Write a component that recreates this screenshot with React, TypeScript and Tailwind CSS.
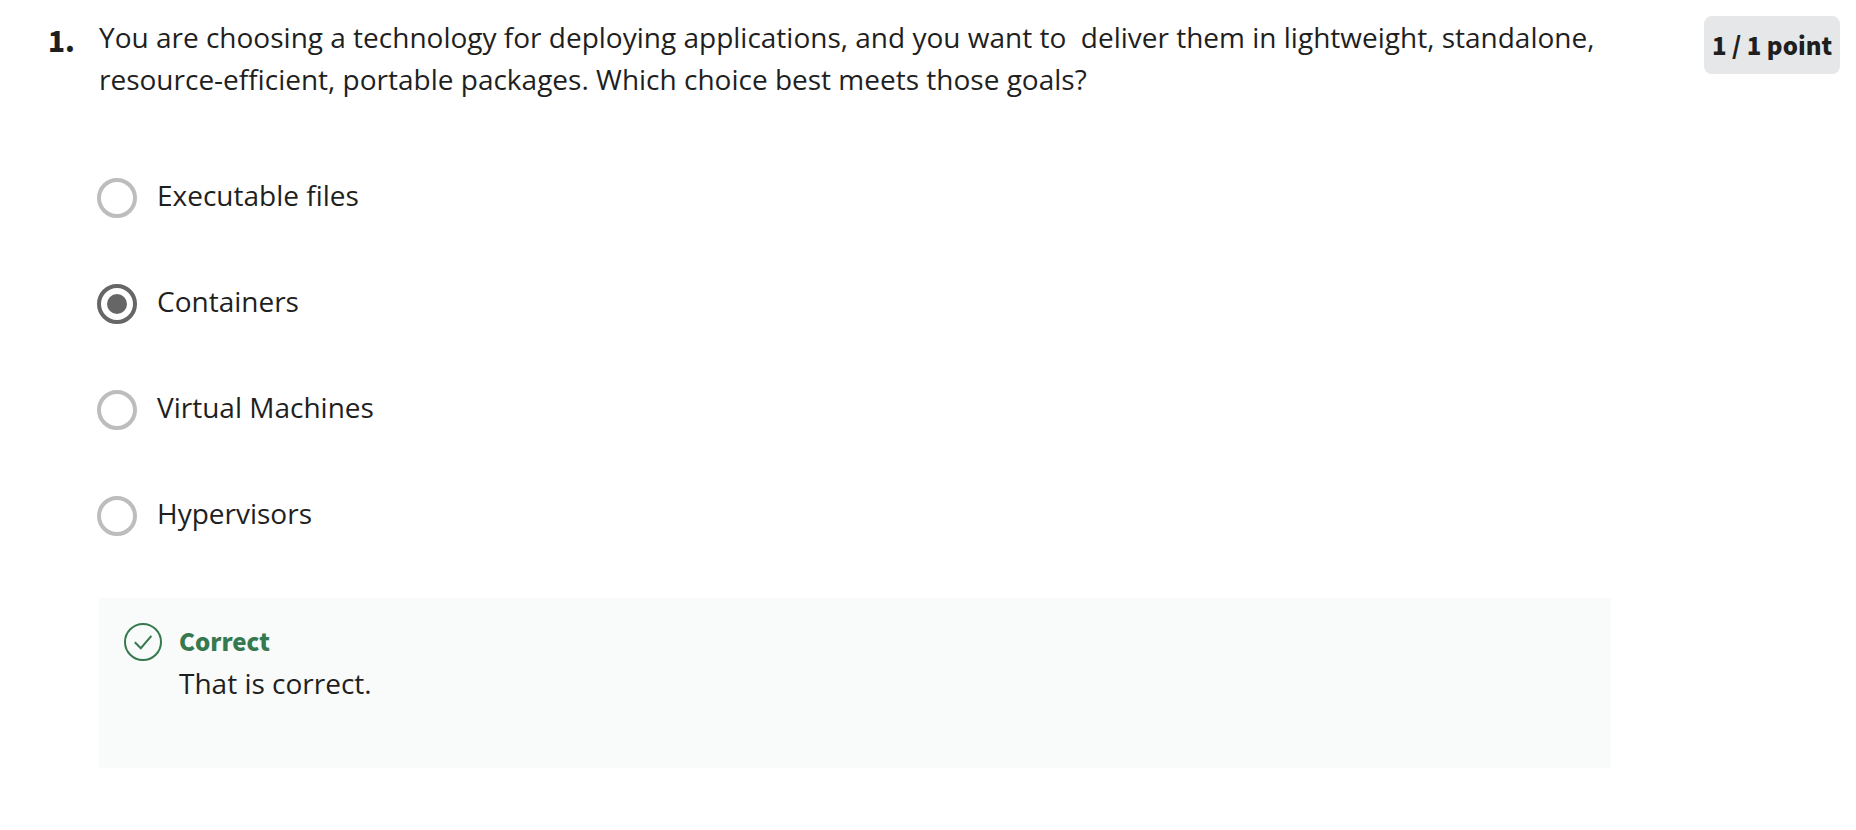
const choices = ['Executable files', 'Containers', 'Virtual Machines', 'Hypervisors'];

const question =
  'You are choosing a technology for deploying applications, and you want to \u00a0deliver them in lightweight, standalone, resource-efficient, portable packages. Which choice best meets those goals?';

function CheckCircle() {
  return (
    <svg className="mt-6 size-10 shrink-0" viewBox="0 0 40 40" fill="none" stroke="#37794f" strokeWidth="2" aria-hidden="true">
      <circle cx="20" cy="20" r="18" />
      <path d="M11.8 20.2 L17.8 26.2 L28.4 13.8" />
    </svg>
  );
}

export default function App() {
  return (
    <main className="flex items-start bg-white py-4 pr-4 pl-12 font-['Open_Sans',sans-serif] text-[28px] leading-[42px] text-[#1f1f1f]">
      <div className="w-[51px] shrink-0 pt-[3px] font-['Noto_Sans_CJK_SC',sans-serif] font-black">1.</div>
      <fieldset className="min-w-0 flex-1">
        <legend className="pr-3">{question}</legend>
        <div className="flex flex-col gap-[62px] pt-[74px]">
          {choices.map((choice) => (
            <label key={choice} className="-ml-0.5 flex items-start gap-5">
              <input
                type="radio"
                name="answer"
                value={choice}
                defaultChecked={choice === 'Containers'}
                className="mt-1 grid size-10 shrink-0 appearance-none place-items-center rounded-full border-4 border-[#bdbdbd] before:size-5 before:rounded-full checked:border-[#666] checked:before:bg-[#666]"
              />
              <span>{choice}</span>
            </label>
          ))}
          <section className="flex gap-4 bg-[#f8fbfa] pb-16 pl-6">
            <CheckCircle />
            <div className="pt-[22px]">
              <h2 className="font-['Noto_Sans_CJK_SC',sans-serif] text-[24px] font-black text-[#37794f]">Correct</h2>
              <p>That is correct.</p>
            </div>
          </section>
        </div>
      </fieldset>
      <div className="ml-[93px] flex h-[58px] w-[136px] shrink-0 items-center justify-center rounded-lg bg-[#e5e7e8] font-['Noto_Sans_CJK_SC',sans-serif] text-[24px] font-black">
        1 / 1 point
      </div>
    </main>
  );
}
